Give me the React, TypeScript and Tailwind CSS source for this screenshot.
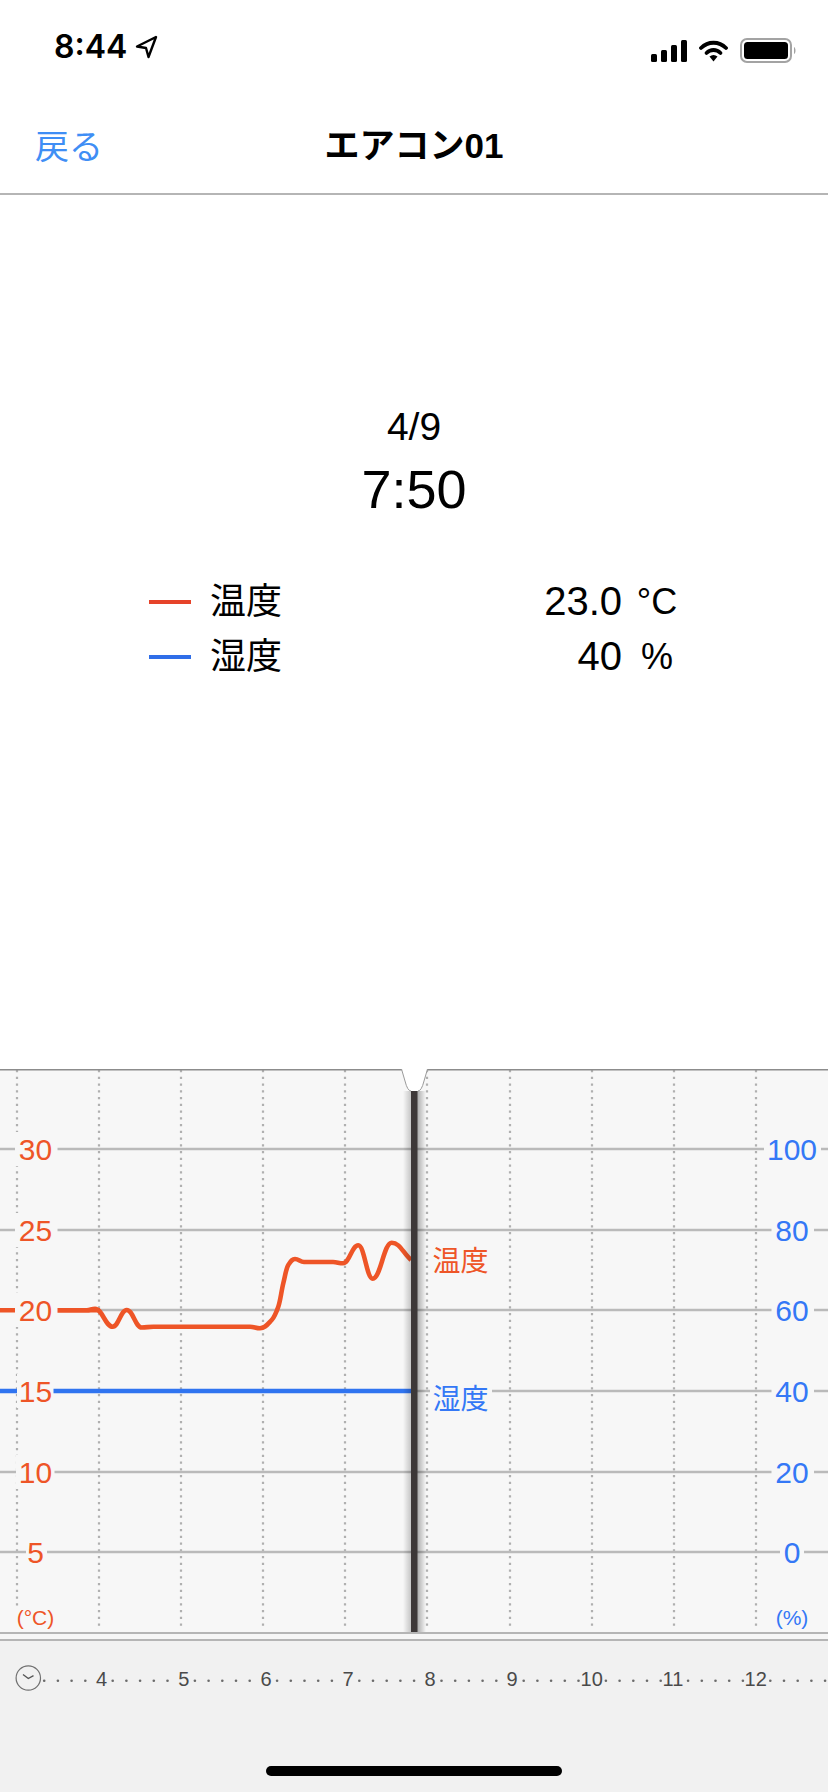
import React from 'react';

const gridX = [17, 99, 181, 263, 345, 427, 510, 592, 674, 756];

// y of each horizontal line with its two axis labels, and the gaps the labels cut out of it
const rows = [
  { y: 1149, temp: '30', hum: '100', l: [15, 57.5], r: [764, 821] },
  { y: 1230, temp: '25', hum: '80', l: [15, 57.5], r: [771.5, 814] },
  { y: 1310, temp: '20', hum: '60', l: [15, 57.5], r: [771.5, 814] },
  { y: 1391, temp: '15', hum: '40', l: [17, 53.5], r: [771.5, 814] },
  { y: 1472, temp: '10', hum: '20', l: [16, 54.5], r: [771.5, 814] },
  { y: 1552, temp: '5', hum: '0', l: [26, 47], r: [780, 804] },
];

const tempPoints: [number, number][] = [
  [57, 1310.3], [86.7, 1310.3], [95, 1308.8], [112.7, 1326.7], [126.7, 1310], [141.7, 1327.5],
  [153.3, 1326.7], [250, 1326.7], [260, 1328.3], [271.7, 1320], [278.3, 1306.7], [283.3, 1283.3],
  [288.3, 1265], [295, 1259], [304, 1262], [333, 1262], [343, 1263.3], [358.3, 1245.3],
  [372.7, 1278.7], [391.7, 1242.7], [411, 1260],
];

// monotone cubic, so the peaks of the curve stay round and do not overshoot
const smooth = (pts: [number, number][]) => {
  const slope = (a: [number, number], b: [number, number]) => (b[1] - a[1]) / (b[0] - a[0]);
  const m = pts.map((p, i) => {
    if (i === 0) return slope(p, pts[1]);
    if (i === pts.length - 1) return slope(pts[i - 1], p);
    const s0 = slope(pts[i - 1], p);
    const s1 = slope(p, pts[i + 1]);
    return s0 * s1 <= 0 ? 0 : (2 * s0 * s1) / (s0 + s1);
  });
  let d = `M${pts[0][0]},${pts[0][1]}`;
  for (let i = 0; i < pts.length - 1; i++) {
    const [x0, y0] = pts[i];
    const [x1, y1] = pts[i + 1];
    const h = (x1 - x0) / 2.4;
    d += ` C${x0 + h},${y0 + m[i] * h} ${x1 - h},${y1 - m[i + 1] * h} ${x1},${y1}`;
  }
  return d;
};

const hours = [
  { label: '4', x: 101.5 },
  { label: '5', x: 183.7 },
  { label: '6', x: 266 },
  { label: '7', x: 348 },
  { label: '8', x: 430 },
  { label: '9', x: 512 },
  { label: '10', x: 591.7 },
  { label: '11', x: 673 },
  { label: '12', x: 755.7 },
];

// minor ticks: every sixth of an hour, skipping the hour itself
const ticks: number[] = [];
for (let k = -4; k <= 53; k++) {
  if (k % 6 !== 0) ticks.push(99 + k * 13.7);
}

const StatusBar = () => (
  <div className="relative h-[94px] shrink-0">
    <div className="flex items-center pl-[54px] pt-[29px]">
      <span className="font-['Inter',sans-serif] text-[32px] leading-[36px] font-semibold text-black">8:44</span>
      <svg className="ml-[8px] mt-[-1px]" width="23" height="24" viewBox="0 0 23 24" fill="none">
        <path d="M21 2 L2 11.5 L11 13 L13.5 22 Z" stroke="#000" strokeWidth="2.4" strokeLinejoin="round" />
      </svg>
    </div>
    <div className="absolute right-[31px] top-[38px] flex items-center">
      <svg width="36" height="22" viewBox="0 0 36 22" fill="#000">
        <rect x="0" y="14" width="6" height="8" rx="1.5" />
        <rect x="10" y="10" width="6" height="12" rx="1.5" />
        <rect x="20" y="5" width="6" height="17" rx="1.5" />
        <rect x="30" y="0" width="6" height="22" rx="1.5" />
      </svg>
      <svg className="ml-[12px]" width="29" height="22" viewBox="0 0 29 22" fill="none">
        <path d="M2 8 C9 1 20 1 27 8" stroke="#000" strokeWidth="3.8" strokeLinecap="round" />
        <path d="M7.5 13 C11.5 9 17.5 9 21.5 13" stroke="#000" strokeWidth="3.8" strokeLinecap="round" />
        <path d="M10.5 16.5 L14.5 21.5 L18.5 16.5 C16 14.5 13 14.5 10.5 16.5 Z" fill="#000" />
      </svg>
      <svg className="ml-[12px]" width="57" height="25" viewBox="0 0 57 25" fill="none">
        <rect x="1" y="1" width="50" height="23" rx="6" stroke="#a3a3a3" strokeWidth="2" />
        <rect x="4" y="4" width="44" height="17" rx="3.5" fill="#000" />
        <path d="M54 9 C56 10 56 15 54 16 Z" fill="#a3a3a3" />
      </svg>
    </div>
  </div>
);

const NavBar = () => (
  <div className="relative flex h-[101px] shrink-0 items-center justify-center border-b-2 border-[#b5b5b5] pt-[4px]">
    <span className="absolute left-[35px] top-[32px] text-[34px] leading-[42px] text-[#3f8ef5]">戻る</span>
    <span className="text-[35px] leading-[42px] font-bold text-black">エアコン01</span>
  </div>
);

const LegendRow = ({ color, label, value, unit }: { color: string; label: string; value: string; unit: string }) => (
  <div className="flex h-[55px] items-center pl-[149px]">
    <div className={`h-[4px] w-[42px] ${color}`} />
    <span className="ml-[19px] w-[72px] text-[36px] leading-[55px] text-black">{label}</span>
    <span className="w-[340px] text-right text-[40px] leading-[55px] text-black">{value}</span>
    <span className="ml-[3px] w-[64px] text-center text-[36px] leading-[55px] text-black">{unit}</span>
  </div>
);

const Chart = () => (
  <svg className="block shrink-0" width="828" height="565" viewBox="0 1069 828 565">
    <defs>
      <linearGradient id="shadowLeft" x1="0" x2="1" y1="0" y2="0">
        <stop offset="0" stopColor="#000" stopOpacity="0" />
        <stop offset="1" stopColor="#000" stopOpacity="0.2" />
      </linearGradient>
      <linearGradient id="shadowRight" x1="0" x2="1" y1="0" y2="0">
        <stop offset="0" stopColor="#000" stopOpacity="0.32" />
        <stop offset="1" stopColor="#000" stopOpacity="0" />
      </linearGradient>
    </defs>
    <rect x="0" y="1069" width="828" height="565" fill="#f7f7f7" />
    {gridX.map((x) => (
      <line key={x} x1={x} x2={x} y1="1070" y2="1630" stroke="#b0b0b0" strokeWidth="2.2" strokeDasharray="2.3 4.45" />
    ))}
    {rows.map((r) => (
      <line key={r.y} x1="0" x2="828" y1={r.y} y2={r.y} stroke="#bababa" strokeWidth="2.4" />
    ))}
    <line x1="0" x2="100" y1="1310.3" y2="1310.3" stroke="#ee5527" strokeWidth="4.6" />
    <line x1="0" x2="411" y1="1391" y2="1391" stroke="#3074f0" strokeWidth="4.6" />
    <path d={smooth(tempPoints)} fill="none" stroke="#ee5527" strokeWidth="4.6" strokeLinejoin="round" />

    {rows.map((r) => (
      <g key={r.temp}>
        <rect x={r.l[0]} y={r.y - 17} width={r.l[1] - r.l[0]} height="34" fill="#f7f7f7" />
        <rect x={r.r[0]} y={r.y - 17} width={r.r[1] - r.r[0]} height="34" fill="#f7f7f7" />
        <text x="35.5" y={r.y + 11} textAnchor="middle" className="fill-[#ee5527] text-[30px]">
          {r.temp}
        </text>
        <text x="792" y={r.y + 11} textAnchor="middle" className="fill-[#3478f6] text-[30px]">
          {r.hum}
        </text>
      </g>
    ))}

    <rect x="15" y="1606" width="40" height="27" fill="#f7f7f7" />
    <text x="35.5" y="1625" textAnchor="middle" className="fill-[#ee5527] text-[21px]">
      (°C)
    </text>
    <rect x="774" y="1606" width="36" height="27" fill="#f7f7f7" />
    <text x="792" y="1625" textAnchor="middle" className="fill-[#3478f6] text-[21px]">
      (%)
    </text>

    <rect x="403" y="1091" width="8" height="543" fill="url(#shadowLeft)" />
    <rect x="417" y="1091" width="9" height="543" fill="url(#shadowRight)" />
    <rect x="411" y="1091" width="6.5" height="543" fill="#3d3838" />

    <rect x="430" y="1380" width="62" height="24" fill="#f7f7f7" />
    <text x="432.5" y="1271" className="fill-[#ee5527] text-[28px]">
      温度
    </text>
    <text x="432.5" y="1409" className="fill-[#3478f6] text-[28px]">
      湿度
    </text>

    <rect x="0" y="1069" width="828" height="1.5" fill="#8c8c8c" />
    <path
      d="M401.5,1069 L405,1081 Q407.5,1091 411,1091 L418,1091 Q421.5,1091 424,1081 L427.5,1069 Z"
      fill="#fff"
      stroke="none"
    />
    <path
      d="M401.5,1069 L405,1081 Q407.5,1091 411,1091 M418,1091 Q421.5,1091 424,1081 L427.5,1069"
      fill="none"
      stroke="#9a9a9a"
      strokeWidth="1"
    />
    <rect x="0" y="1632" width="828" height="2" fill="#b5b5b5" />
  </svg>
);

const TimeAxis = () => (
  <div className="relative flex-1 bg-[#f1f1f1]">
    <div className="h-[5px] bg-[#f6f6f6]" />
    <div className="h-[2px] bg-[#b5b5b5]" />
    <svg className="block" width="828" height="60" viewBox="0 1641 828 60">
      <circle cx="28.3" cy="1678" r="12.2" fill="none" stroke="#707070" strokeWidth="1.2" />
      <path d="M23,1674.5 L28.3,1678.5 L33.5,1675.7" fill="none" stroke="#555" strokeWidth="1.4" />
      {ticks
        .filter((x) => x > 40)
        .map((x) => (
          <circle key={x} cx={x} cy="1680.7" r="1.3" fill="#6b6b6b" />
        ))}
      {hours.map((h) => (
        <text key={h.label} x={h.x} y="1686" textAnchor="middle" className="fill-[#4a4a4a] text-[20px]">
          {h.label}
        </text>
      ))}
    </svg>
    <div className="absolute left-[266px] top-[132px] h-[10px] w-[296px] rounded-full bg-black" />
  </div>
);

export default function App() {
  return (
    <div
      lang="ja"
      className="flex h-[1792px] w-[828px] flex-col overflow-hidden bg-white font-['Liberation_Sans','Noto_Sans_CJK_JP',sans-serif]"
    >
      <StatusBar />
      <NavBar />
      <div className="flex h-[874px] shrink-0 flex-col">
        <div className="pt-[210px] text-center text-black">
          <div className="text-[39px] leading-[44px]">4/9</div>
          <div className="mt-[9px] text-[54px] leading-[62px]">7:50</div>
        </div>
        <div className="mt-[54px]">
          <LegendRow color="bg-[#e6432a]" label="温度" value="23.0" unit="°C" />
          <LegendRow color="bg-[#2f6ee8]" label="湿度" value="40" unit="%" />
        </div>
      </div>
      <Chart />
      <TimeAxis />
    </div>
  );
}
